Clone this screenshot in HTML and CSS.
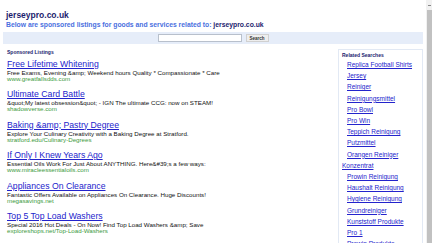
FILE: index.html
```html
<!DOCTYPE html>
<html lang="en">
<head>
    <meta charset="UTF-8">
    <meta name="viewport" content="width=device-width, initial-scale=1.0">
    <title>jerseypro.co.uk</title>
    <link rel="stylesheet" href="styles.css">
</head>
<body>

<div class="header">
    <div class="site-name">jerseypro.co.uk</div>
    <div class="tagline">Below are sponsored listings for goods and services related to: <span>jerseypro.co.uk</span></div>
</div>

<!-- 검색 바 -->
<form class="search-bar">
    <input type="text" class="search-input">
    <button type="button" class="search-button">Search</button>
</form>

<div class="content">
    <div class="listings">
        <h3>Sponsored Listings</h3>

        <div class="listing">
            <a href="#" class="listing-title">Free Lifetime Whitening</a>
            <div class="listing-desc">Free Exams, Evening &amp;amp; Weekend hours Quality * Compassionate * Care</div>
            <div class="listing-url">www.greatfallsdds.com</div>
        </div>

        <div class="listing">
            <a href="#" class="listing-title">Ultimate Card Battle</a>
            <div class="listing-desc">&amp;quot;My latest obsession&amp;quot; - IGN The ultimate CCG: now on STEAM!</div>
            <div class="listing-url">shadowverse.com</div>
        </div>

        <div class="listing">
            <a href="#" class="listing-title">Baking &amp;amp; Pastry Degree</a>
            <div class="listing-desc">Explore Your Culinary Creativity with a Baking Degree at Stratford.</div>
            <div class="listing-url">stratford.edu/Culinary-Degrees</div>
        </div>

        <div class="listing">
            <a href="#" class="listing-title">If Only I Knew Years Ago</a>
            <div class="listing-desc">Essential Oils Work For Just About ANYTHING. Here&amp;#39;s a few ways:</div>
            <div class="listing-url">www.miracleessentialoils.com</div>
        </div>

        <div class="listing">
            <a href="#" class="listing-title">Appliances On Clearance</a>
            <div class="listing-desc">Fantastic Offers Available on Appliances On Clearance. Huge Discounts!</div>
            <div class="listing-url">megasavings.net</div>
        </div>

        <div class="listing">
            <a href="#" class="listing-title">Top 5 Top Load Washers</a>
            <div class="listing-desc">Special 2016 Hot Deals - On Now! Find Top Load Washers &amp;amp; Save</div>
            <div class="listing-url">exploreshops.net/Top-Load-Washers</div>
        </div>
    </div>

    <!-- 관련 검색어 -->
    <div class="related">
        <h3>Related Searches</h3>
        <ul>
            <li><a href="#">Replica Football Shirts</a></li>
            <li><a href="#">Jersey</a></li>
            <li><a href="#">Reiniger</a></li>
            <li><a href="#">Reinigungsmittel</a></li>
            <li><a href="#">Pro Bowl</a></li>
            <li><a href="#">Pro Win</a></li>
            <li><a href="#">Teppich Reinigung</a></li>
            <li><a href="#">Putzmittel</a></li>
            <li><a href="#">Orangen Reiniger Konzentrat</a></li>
            <li><a href="#">Prowin Reinigung</a></li>
            <li><a href="#">Haushalt Reinigung</a></li>
            <li><a href="#">Hygiene Reinigung</a></li>
            <li><a href="#">Grundreiniger</a></li>
            <li><a href="#">Kunststoff Produkte</a></li>
            <li><a href="#">Pro 1</a></li>
            <li><a href="#">Prowin Produkte</a></li>
        </ul>
    </div>
</div>

<!-- 스크롤바 모양 -->
<div class="fake-scrollbar">
    <div class="scroll-arrow"></div>
    <div class="scroll-thumb"></div>
</div>

</body>
</html>
```

FILE: styles.css
```css
body {
    font-family: "Liberation Sans", Arial, sans-serif;
    margin: 0;
    padding: 0 9px 0 3px;
    background-color: #ffffff;
    color: #000000;
}
/* 스크롤바 */
::-webkit-scrollbar {
    display: none;
}
.fake-scrollbar {
    position: fixed;
    top: 0;
    right: 0;
    bottom: 0;
    width: 6px;
    background-color: #f1f1f1;
    display: flex;
    flex-direction: column;
}
.scroll-arrow {
    height: 10px;
    display: flex;
    justify-content: center;
    align-items: center;
}
.scroll-arrow::before {
    content: "";
    width: 3px;
    height: 1px;
    background-color: #888888;
}
.scroll-thumb {
    flex: 1;
    margin: 0 0.5px;
    background-color: #c1c1c1;
}
/* 헤더 */
.header {
    padding: 10px 3px 0;
}
.site-name {
    font-size: 8.5px;
    font-weight: bold;
    color: #1c1c6e;
    line-height: 10px;
}
.tagline {
    font-size: 6.8px;
    font-weight: bold;
    color: #4a6fe0;
    line-height: 10px;
}
.tagline span {
    color: #1c1c6e;
}
/* 검색 바 */
.search-bar {
    display: flex;
    justify-content: center;
    align-items: center;
    gap: 4px;
    margin: 2px 0 0;
    height: 12px;
    background-color: #e6edf9;
}
.search-input {
    width: 84px;
    height: 8px;
    box-sizing: border-box;
    border: 1px solid #b8c0cc;
    padding: 0;
    background-color: #ffffff;
}
.search-button {
    width: 23px;
    height: 8px;
    box-sizing: border-box;
    padding: 0;
    font-family: "Liberation Sans", Arial, sans-serif;
    font-size: 4.5px;
    font-weight: bold;
    color: #333333;
    background-color: #eeeeee;
    border: 1px solid #d0d0d0;
}
/* 본문 */
.content {
    display: flex;
    justify-content: space-between;
    align-items: flex-start;
    padding: 5px 0 0 4px;
}
h3 {
    font-size: 5px;
    font-weight: bold;
    color: #1c1c6e;
    margin: 0;
    line-height: 7px;
}
.listing {
    margin-top: 2.6px;
    margin-bottom: 7px;
}
.listing-title {
    display: block;
    font-size: 8.7px;
    line-height: 10px;
    color: #2323cc;
    text-decoration: underline;
}
.listing-desc {
    font-size: 6.2px;
    line-height: 7px;
    color: #111111;
}
.listing-url {
    font-size: 6.2px;
    line-height: 6.5px;
    color: #3c9a3c;
}
/* 관련 검색어 박스 */
.related {
    width: 85px;
    box-sizing: border-box;
    border: 1px solid #e2e9f4;
    border-bottom: none;
    padding: 2px 3px 4px 3px;
}
.related ul {
    list-style: none;
    margin: 0;
    padding: 0;
}
.related li {
    font-size: 6.5px;
    line-height: 11.2px;
    text-indent: 5px;
}
.related a {
    color: #2323cc;
    text-decoration: underline;
}
```
